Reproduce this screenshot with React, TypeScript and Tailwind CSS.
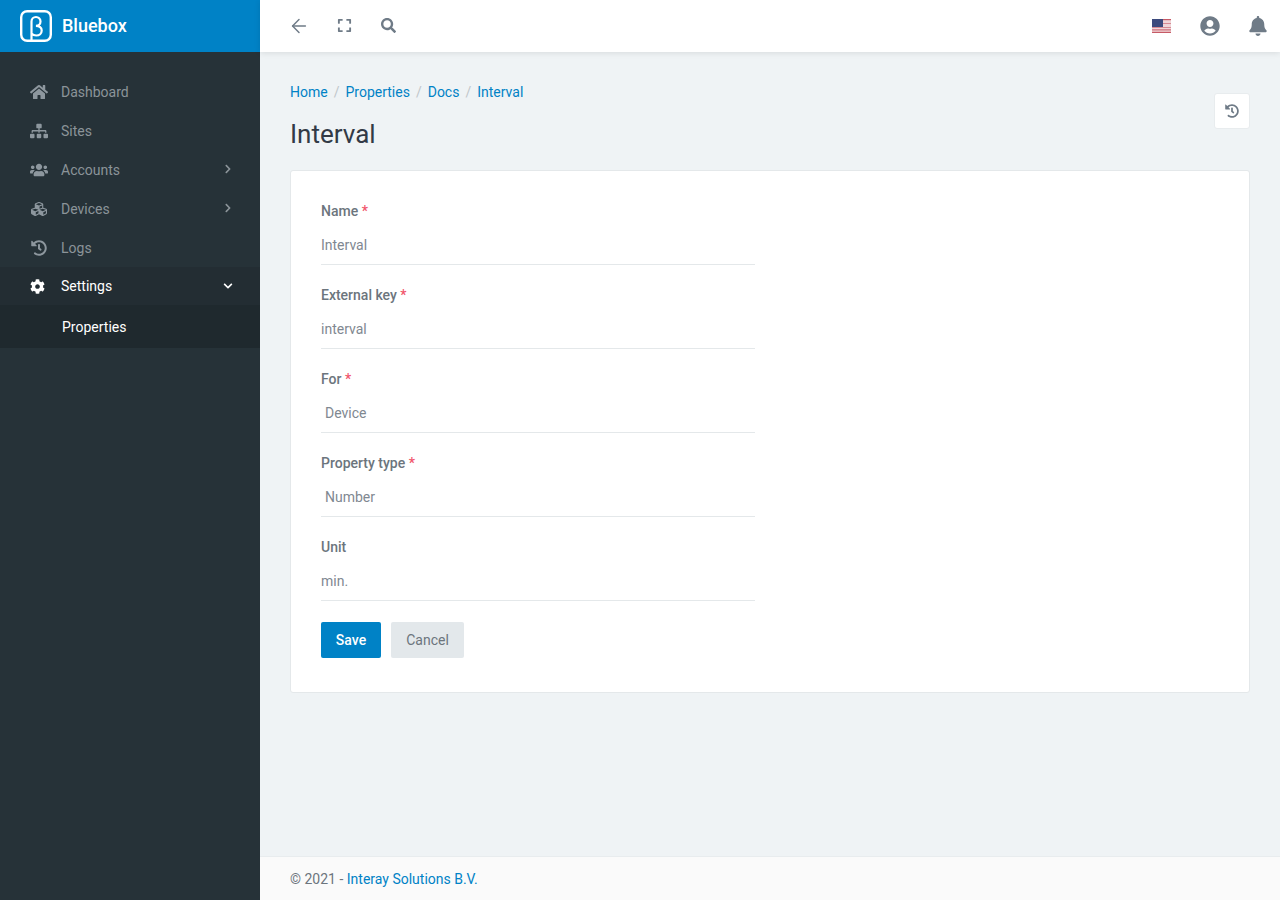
import { ArrowLeft } from "lucide-react";
import {
  FaBell,
  FaChevronDown,
  FaChevronRight,
  FaCog,
  FaCubes,
  FaExpand,
  FaHistory,
  FaHome,
  FaSearch,
  FaSitemap,
  FaUserCircle,
  FaUsers,
} from "react-icons/fa";

const navItems = [
  { label: "Dashboard", icon: FaHome, arrow: false },
  { label: "Sites", icon: FaSitemap, arrow: false },
  { label: "Accounts", icon: FaUsers, arrow: true },
  { label: "Devices", icon: FaCubes, arrow: true },
  { label: "Logs", icon: FaHistory, arrow: false },
];

const fields = [
  { label: "Name", value: "Interval", required: true, select: false },
  { label: "External key", value: "interval", required: true, select: false },
  { label: "For", value: "Device", required: true, select: true },
  { label: "Property type", value: "Number", required: true, select: true },
  { label: "Unit", value: "min.", required: false, select: false },
];

const crumbs = ["Home", "Properties", "Docs", "Interval"];

const BetaLogo = () => (
  <svg width="32" height="32" viewBox="0 0 32 32" fill="none" stroke="#fff">
    <rect x="1.2" y="1.2" width="29.6" height="29.6" rx="6" strokeWidth="2.4" />
    <path
      d="M11.5 31V11.5a4.5 4.5 0 0 1 9 0c0 2.6-2 4.3-4.6 4.3 3.6 0 5.8 2 5.8 4.7 0 3-2.4 5-5.4 5-2 0-3.6-.7-4.8-2"
      strokeWidth="2.2"
    />
  </svg>
);

const UsFlag = () => (
  <svg width="19" height="14" viewBox="0 0 19 14">
    <rect width="19" height="14" fill="#f0d5d8" />
    <rect y="0" width="19" height="1.2" fill="#c65a66" />
    <rect y="4" width="19" height="1" fill="#d68a94" />
    <rect y="8" width="19" height="1" fill="#d68a94" />
    <rect y="10.4" width="19" height="1" fill="#c65a66" />
    <rect y="12.8" width="19" height="1.2" fill="#c65a66" />
    <rect width="11" height="8" fill="#3c4a7d" />
  </svg>
);

export default function App() {
  return (
    <div className="flex h-[900px] w-[1280px] overflow-hidden bg-[#eff3f5] font-['Roboto',sans-serif] text-sm text-[#6c757d]">
      {/* Sidebar */}
      <aside className="flex w-[260px] shrink-0 flex-col bg-[#263238]">
        <div className="flex h-[52px] items-center gap-2.5 bg-[#0082c6] pl-5">
          <BetaLogo />
          <span className="text-[18px] font-medium text-white">Bluebox</span>
        </div>
        <nav className="pt-5">
          {navItems.map((item) => (
            <div key={item.label} className="flex h-[39px] items-center pl-[30px] pr-[27px] text-[#8b9499]">
              <span className="flex w-[31px] shrink-0 items-center">
                <item.icon className="h-4 w-[18px] text-[#8d979e]" />
              </span>
              <span className="flex-1">{item.label}</span>
              {item.arrow && <FaChevronRight className="mb-0.5 h-2.5 w-2.5" />}
            </div>
          ))}
          <div className="flex h-[38px] items-center bg-[#232d33] pl-[30px] pr-[27px] text-white">
            <span className="flex w-[31px] shrink-0 items-center">
              <FaCog className="h-[15px] w-[15px]" />
            </span>
            <span className="flex-1">Settings</span>
            <FaChevronDown className="h-2.5 w-2.5" />
          </div>
          <div className="flex h-[43px] items-center bg-[#1f292e] pl-[62px] text-white">Properties</div>
        </nav>
      </aside>

      <div className="flex min-w-0 flex-1 flex-col">
        {/* Topbar */}
        <header className="relative z-10 flex h-[52px] shrink-0 items-center justify-between bg-white pl-7 pr-[13px] shadow-[0_1px_6px_rgba(0,0,0,0.1)]">
          <div className="flex items-center text-[#6f7b87]">
            <ArrowLeft className="h-[22px] w-[22px]" strokeWidth={1.6} />
            <FaExpand className="mb-0.5 ml-[27px] h-[15px] w-[15px]" />
            <FaSearch className="mb-0.5 ml-[29px] h-[15px] w-[15px]" />
          </div>
          <div className="flex items-center text-[#6f7b87]">
            <UsFlag />
            <FaUserCircle className="ml-[29px] h-5 w-5" />
            <FaBell className="ml-[29px] h-5 w-[18px]" />
          </div>
        </header>

        {/* Content */}
        <main className="flex-1 px-[30px] pt-[30px]">
          <div className="flex justify-between">
            <div>
              <ol className="flex h-5 items-center text-[#0082c6]">
                {crumbs.map((crumb, i) => (
                  <li key={crumb} className="flex items-center">
                    {i > 0 && <span className="px-[6px] text-[#c0c6ca]">/</span>}
                    {crumb}
                  </li>
                ))}
              </ol>
              <h1 className="mt-[16px] text-[26px] leading-[32px] text-[#323a46]">Interval</h1>
            </div>
            <button className="mt-[11px] flex h-9 w-9 items-center justify-center rounded-[3px] border border-[#e8ecee] bg-white text-[#6f7b87]">
              <FaHistory className="h-3.5 w-3.5" />
            </button>
          </div>

          <form className="mt-[20px] h-[523px] rounded-[3px] border border-[#e4e8ea] bg-white px-[30px] pt-[30px]">
            {fields.map((field) => (
              <div key={field.label} className="mb-[20px] w-[434px]">
                <label className="block h-5 leading-5 font-medium text-[#6c757d]">
                  {field.label}
                  {field.required && <span className="text-[#f1556c]"> *</span>}
                </label>
                <div
                  className={`mt-1 flex h-[40px] items-center border-b border-[#e4e8ea] text-[#7f8891] ${
                    field.select ? "pl-1" : ""
                  }`}
                >
                  {field.value}
                </div>
              </div>
            ))}
            <div className="flex gap-2.5 pt-px">
              <button type="button" className="h-9 w-[60px] rounded-[2px] bg-[#0082c6] font-medium text-white">
                Save
              </button>
              <button type="button" className="h-9 w-[73px] rounded-[2px] bg-[#e3e8eb] text-[#6c757d]">
                Cancel
              </button>
            </div>
          </form>
        </main>

        {/* Footer */}
        <footer className="flex h-[44px] shrink-0 items-center border-t border-[#e8ecee] bg-[#fafafa] px-[30px]">
          <span>
            © 2021 - <span className="text-[#0082c6]">Interay Solutions B.V.</span>
          </span>
        </footer>
      </div>
    </div>
  );
}
